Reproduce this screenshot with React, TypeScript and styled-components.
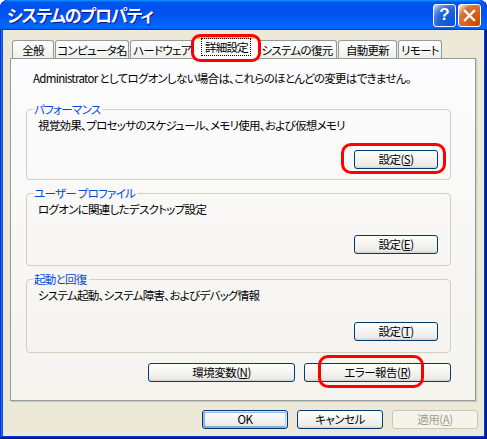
import React from 'react';
import styled, { createGlobalStyle, css } from 'styled-components';

const FONT = `"Noto Sans CJK JP", "Liberation Sans", sans-serif`;

const GlobalStyle = createGlobalStyle`
  html, body {
    margin: 0;
    padding: 0;
    background: #ffffff;
  }
  body {
    font-family: ${FONT};
    font-size: 11.5px;
    letter-spacing: -0.7px;
    color: #000;
  }
  * { box-sizing: border-box; }
`;

const Window = styled.div`
  width: 487px;
  height: 439px;
  display: flex;
  flex-direction: column;
  padding: 0 3px 3px;
  background: #0831d9;
  border-radius: 8px 8px 0 0;
  box-shadow: inset -1px -1px #00138c, inset 1px 1px #0831d9, inset -2px -2px #001ea0,
    inset 2px 2px #166aee, inset -3px -3px #003bda, inset 3px 3px #0855dd;
  font-feature-settings: "palt";
  overflow: hidden;
`;

const TitleBar = styled.div`
  height: 30px;
  margin: 0 -3px;
  padding: 0 6px 0 7px;
  display: flex;
  align-items: center;
  border-radius: 8px 8px 0 0;
  background: linear-gradient(180deg, #0997ff, #0053ee 8%, #0050ee 40%, #06f 88%, #06f 93%, #005bff 95%, #003dd7 96%, #003dd7);
`;

const Title = styled.div`
  flex: 1;
  color: #fff;
  font-family: ${FONT};
  font-size: 17px;
  font-weight: bold;
  letter-spacing: -1.2px;
  text-shadow: 1px 1px #0f1089;
  line-height: 22px;
`;

const CaptionButton = styled.div<{ $kind: 'help' | 'close' }>`
  width: 23px;
  height: 23px;
  margin-left: 2px;
  display: flex;
  align-items: center;
  justify-content: center;
  border: 1px solid #fff;
  border-radius: 3px;
  color: #fff;
  font-family: "Liberation Sans", sans-serif;
  font-weight: bold;
  font-size: 17px;
  letter-spacing: 0;
  background: ${p => p.$kind === 'close'
    ? 'radial-gradient(circle at 90% 90%, #cc4600 0%, #dc6527 55%, #cd7546 70%, #ffccb2 90%, #fff 100%)'
    : 'radial-gradient(circle at 90% 90%, #0054e9 0%, #2263d5 55%, #4479e4 70%, #a3bbec 90%, #fff 100%)'};
`;

const Client = styled.div`
  flex: 1;
  display: flex;
  flex-direction: column;
  background: #ece9d8;
  padding-top: 6px;
`;

const TabStrip = styled.div`
  height: 22px;
  padding-left: 9px;
  display: flex;
  align-items: flex-end;
  position: relative;
  z-index: 2;
`;

const Tab = styled.div<{ $w: number; $active?: boolean }>`
  position: relative;
  width: ${p => p.$w}px;
  height: 18px;
  margin-right: 1px;
  display: flex;
  align-items: center;
  justify-content: center;
  border: 1px solid #919b9c;
  border-bottom: none;
  border-radius: 3px 3px 0 0;
  background: linear-gradient(180deg, #fff, #fafaf9 26%, #f0f0ea 95%, #ecebe6);
  line-height: 14px;
  white-space: nowrap;
  ${p => p.$active && css`
    height: 24px;
    margin: 0 -2px -2px;
    padding-bottom: 4px;
    z-index: 3;
    border-top: 1px solid #e68b2c;
    box-shadow: inset 0 2px #ffc83c;
    background: #fcfcfe;
  `}
`;

const FocusLabel = styled.span`
  padding: 1px 2px 1px 3px;
  outline: 1px dotted #000;
  outline-offset: 0;
`;

const Panel = styled.div`
  margin-left: 7px;
  width: 466px;
  height: 343px;
  border: 1px solid #919b9c;
  background: linear-gradient(180deg, #fcfcfe, #f4f3ee);
  box-shadow: 1px 1px 0 #d0cebf, 2px 2px 0 #e3e0d0;
  display: flex;
  flex-direction: column;
  padding: 0 24px 0 15px;
`;

const Intro = styled.div`
  padding: 12px 0 0 7px;
  line-height: 14px;
  white-space: nowrap;
`;

const Group = styled.fieldset<{ $h: number; $first?: boolean }>`
  height: ${p => p.$h}px;
  margin: ${p => (p.$first ? 17 : 6)}px 0 0;
  padding: 0 12px 0 6px;
  min-width: 0;
  border: 1px solid #d0d0bf;
  border-radius: 4px;
`;

const Legend = styled.legend`
  padding: 0 2px 0 1px;
  color: #0046d5;
  line-height: 14px;
`;

const Desc = styled.div`
  padding: 2px 0 0 5px;
  line-height: 14px;
  white-space: nowrap;
`;

const ButtonRow = styled.div<{ $gap?: number; $mt: number }>`
  display: flex;
  justify-content: flex-end;
  gap: ${p => p.$gap ?? 0}px;
  margin-top: ${p => p.$mt}px;
`;

const Button = styled.button<{ $w: number; $default?: boolean }>`
  width: ${p => p.$w}px;
  height: 19px;
  padding: 0;
  font-family: ${FONT};
  font-feature-settings: "palt";
  font-size: 11.5px;
  letter-spacing: -0.5px;
  line-height: 17px;
  color: #000;
  border: 1px solid #003c74;
  border-radius: 3px;
  background: linear-gradient(180deg, #fff, #ecebe6 86%, #d6d0c5);
  ${p => p.$default && css`
    box-shadow: inset -1px 1px #cee7ff, inset 1px 2px #98b8ea, inset -2px 2px #bcd4f6,
      inset 1px -1px #89ade4, inset 2px -2px #89ade4;
  `}
  &:disabled {
    border-color: #c9c7ba;
    background: #f5f4ea;
    color: #a1a192;
  }
`;

const Anchor = styled.div`
  position: relative;
  display: flex;
`;

const Ring = styled.span<{ $t: number; $r: number; $b: number; $l: number; $rad?: number }>`
  position: absolute;
  top: ${p => p.$t}px;
  right: ${p => p.$r}px;
  bottom: ${p => p.$b}px;
  left: ${p => p.$l}px;
  border: 3px solid #ff0000;
  border-radius: ${p => p.$rad ?? 9}px;
  pointer-events: none;
  z-index: 5;
`;

const Footer = styled.div`
  display: flex;
  justify-content: flex-end;
  gap: 9px;
  padding: 9px 6px 0 0;
`;

const CloseGlyph = () => (
  <svg width="13" height="13" viewBox="0 0 13 13">
    <path d="M2 2 L11 11 M11 2 L2 11" stroke="#fff" strokeWidth="2.4" strokeLinecap="square" />
  </svg>
);

const tabs: { label: string; w: number; active?: boolean }[] = [
  { label: '全般', w: 42 },
  { label: 'コンピュータ名', w: 74 },
  { label: 'ハードウェア', w: 64 },
  { label: '詳細設定', w: 66, active: true },
  { label: 'システムの復元', w: 80 },
  { label: '自動更新', w: 59 },
  { label: 'リモート', w: 44 },
];

const Label: React.FC<{ text: string; k: string }> = ({ text, k }) => (
  <>
    {text}(<u>{k}</u>)
  </>
);

export default function App() {
  return (
    <>
      <GlobalStyle />
      <Window>
        <TitleBar>
          <Title>システムのプロパティ</Title>
          <CaptionButton $kind="help">?</CaptionButton>
          <CaptionButton $kind="close"><CloseGlyph /></CaptionButton>
        </TitleBar>
        <Client>
          <TabStrip>
            {tabs.map(t => (
              <Tab key={t.label} $w={t.w} $active={t.active}>
                {t.active ? <FocusLabel>{t.label}</FocusLabel> : t.label}
                {t.active && <Ring $t={-3} $r={-3} $b={-2} $l={-3} $rad={9} />}
              </Tab>
            ))}
          </TabStrip>
          <Panel>
            <Intro>Administrator としてログオンしない場合は、これらのほとんどの変更はできません。</Intro>

            <Group $h={78} $first>
              <Legend>パフォーマンス</Legend>
              <Desc>視覚効果、プロセッサのスケジュール、メモリ使用、および仮想メモリ</Desc>
              <ButtonRow $mt={18}>
                <Anchor>
                  <Button $w={84}><Label text="設定" k="S" /></Button>
                  <Ring $t={-7} $r={-8} $b={-5} $l={-13} $rad={10} />
                </Anchor>
              </ButtonRow>
            </Group>

            <Group $h={80}>
              <Legend>ユーザー プロファイル</Legend>
              <Desc>ログオンに関連したデスクトップ設定</Desc>
              <ButtonRow $mt={19}>
                <Button $w={84}><Label text="設定" k="E" /></Button>
              </ButtonRow>
            </Group>

            <Group $h={81}>
              <Legend>起動と回復</Legend>
              <Desc>システム起動、システム障害、およびデバッグ情報</Desc>
              <ButtonRow $mt={20}>
                <Button $w={84}><Label text="設定" k="T" /></Button>
              </ButtonRow>
            </Group>

            <ButtonRow $gap={9} $mt={10}>
              <Button $w={147}><Label text="環境変数" k="N" /></Button>
              <Anchor>
                <Button $w={147}><Label text="エラー報告" k="R" /></Button>
                <Ring $t={-8} $r={27} $b={-6} $l={14} $rad={10} />
              </Anchor>
            </ButtonRow>
          </Panel>
          <Footer>
            <Button $w={86} $default>OK</Button>
            <Button $w={86}>キャンセル</Button>
            <Button $w={86} disabled><Label text="適用" k="A" /></Button>
          </Footer>
        </Client>
      </Window>
    </>
  );
}
